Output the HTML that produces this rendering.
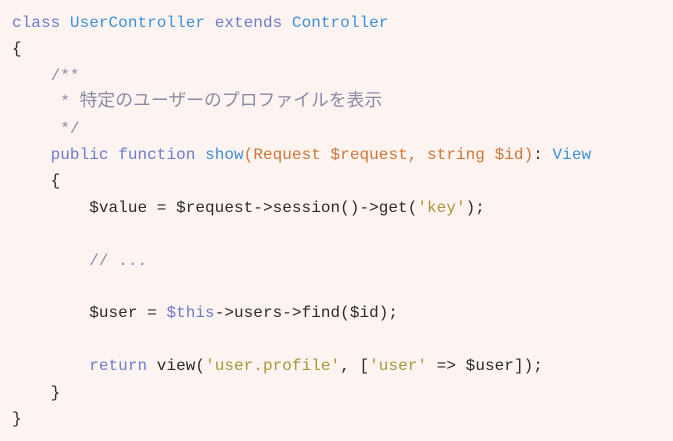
<!DOCTYPE html>
<html><head><meta charset="utf-8"><style>
html,body{margin:0;padding:0;background:#fdf4f1;width:673px;height:441px;overflow:hidden}
pre{margin:0;padding:10px 0 0 12px;font-family:"Liberation Mono","Noto Sans CJK JP",monospace;font-size:16px;line-height:26.4px;color:#2a2a2a;letter-spacing:0.05px}
.k{color:#6b7bc8}.c{color:#3d8fd8}.o{color:#d07535}.s{color:#a8963a}.m{color:#8a8aa5}
.j{font-size:17.8px;line-height:10px}
</style></head><body><pre><span class="k">class</span> <span class="c">UserController</span> <span class="k">extends</span> <span class="c">Controller</span>
{
    <span class="m">/**</span>
<span class="m">     * <span class="j">特定のユーザーのプロファイルを表示</span></span>
<span class="m">     */</span>
    <span class="k">public</span> <span class="k">function</span> <span class="c">show</span><span class="o">(Request $request, string $id)</span>: <span class="c">View</span>
    {
        $value = $request->session()->get(<span class="s">'key'</span>);

        <span class="m">// ...</span>

        $user = <span class="k">$this</span>->users->find($id);

        <span class="k">return</span> view(<span class="s">'user.profile'</span>, [<span class="s">'user'</span> => $user]);
    }
}</pre></body></html>
